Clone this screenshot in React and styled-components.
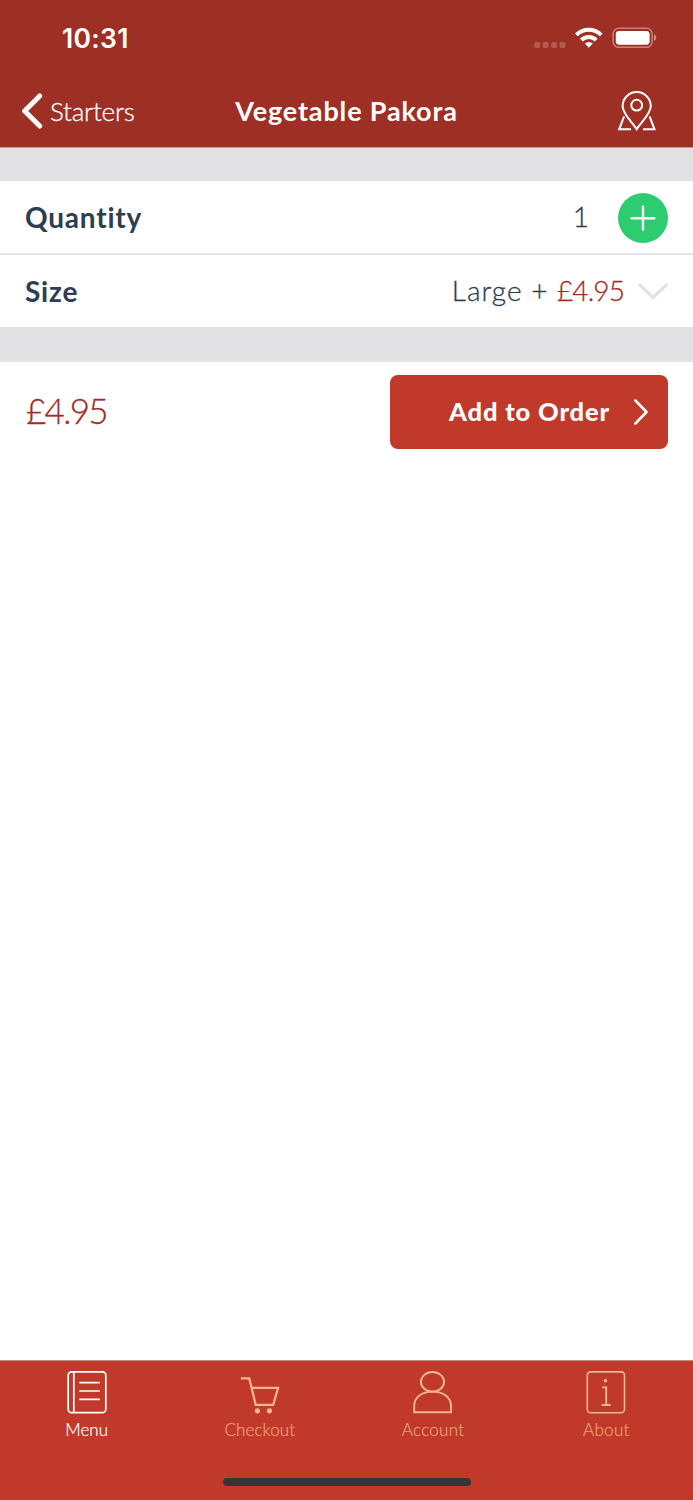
import styled, { createGlobalStyle } from "styled-components";

const v = {
  header: "#9e2f25",
  primary: "#c0392b",
  price: "#a12d22",
  text: "#2c3e50",
  gray: "#e2e2e4",
  green: "#2ecc71",
  tab: "#eda47c",
  tabIcon: "#f0b88c",
};

const tabs = [
  { name: "Menu", icon: <MenuIcon />, active: true, spacing: 0 },
  { name: "Checkout", icon: <CartIcon />, spacing: 0.1 },
  { name: "Account", icon: <AccountIcon />, spacing: 0.3 },
  { name: "About", icon: <AboutIcon />, spacing: 0.3 },
];

export default function App() {
  return (
    <Container>
      <GlobalStyle />
      <Header>
        <StatusBar>
          <Time>10:31</Time>
          <StatusIcons />
        </StatusBar>
        <NavBar>
          <BackButton>
            <svg width="22" height="36" viewBox="0 0 22 36" fill="none">
              <path
                d="M18.7 3 3.6 18 18.7 33"
                stroke="#fff"
                strokeWidth="5"
                strokeLinecap="round"
                strokeLinejoin="round"
              />
            </svg>
            <span>Starters</span>
          </BackButton>
          <Title>Vegetable Pakora</Title>
          <MapButton>
            <MapIcon />
          </MapButton>
        </NavBar>
      </Header>
      <Separator $height={33} />
      <Row $height={74} $border>
        <Label>Quantity</Label>
        <Quantity>1</Quantity>
        <AddButton>
          <svg width="50" height="50" viewBox="0 0 50 50">
            <path
              d="M25 13.8v22.8M13.6 25.2h22.8"
              stroke="#fff"
              strokeWidth="2.4"
              strokeLinecap="round"
            />
          </svg>
        </AddButton>
      </Row>
      <Row $height={72}>
        <Label>Size</Label>
        <Value>
          Large + <em>£4.95</em>
        </Value>
        <svg width="30" height="18" viewBox="0 0 30 18" fill="none">
          <path
            d="M1.8 3 15 15.5 28.2 3"
            stroke={v.gray}
            strokeWidth="3.4"
            strokeLinecap="round"
            strokeLinejoin="round"
          />
        </svg>
      </Row>
      <Separator $height={35} />
      <OrderBar>
        <Total>£4.95</Total>
        <OrderButton>
          <span>Add to Order</span>
          <svg width="16" height="28" viewBox="0 0 16 28" fill="none">
            <path
              d="M2.3 2.4 13.5 14 2.3 25.6"
              stroke="#fff"
              strokeWidth="2.7"
              strokeLinecap="round"
              strokeLinejoin="round"
            />
          </svg>
        </OrderButton>
      </OrderBar>
      <TabBar>
        <Tabs>
          {tabs.map((tab) => (
            <Tab key={tab.name} $active={tab.active} $spacing={tab.spacing}>
              {tab.icon}
              <span>{tab.name}</span>
            </Tab>
          ))}
        </Tabs>
        <HomeIndicator />
      </TabBar>
    </Container>
  );
}

function StatusIcons() {
  return (
    <svg width="124" height="24" viewBox="0 0 124 24" fill="none">
      <g fill="#fff" fillOpacity=".22">
        <rect x="0.3" y="16" width="6" height="6" rx="2" />
        <rect x="8.7" y="16" width="6" height="6" rx="2" />
        <rect x="17.1" y="16" width="6" height="6" rx="2" />
        <rect x="25.5" y="16" width="6" height="6" rx="2" />
      </g>
      <g stroke="#fff" strokeWidth="4">
        <path d="M42.4 8.8a17.6 17.6 0 0 1 24.8 0" />
        <path d="M47.4 14.1a10.4 10.4 0 0 1 14.8 0" />
      </g>
      <path d="M50.8 17.6a5.6 5.6 0 0 1 8 0l-4 4.1z" fill="#fff" />
      <rect
        x="79.1"
        y="2.3"
        width="39"
        height="19"
        rx="5.6"
        stroke="#fff"
        strokeOpacity=".4"
        strokeWidth="1.5"
      />
      <rect x="81.8" y="4.9" width="33.8" height="13.8" rx="3.4" fill="#fff" />
      <path d="M120 8.6c3.1 1.2 3.1 5.2 0 6.4z" fill="#fff" fillOpacity=".45" />
    </svg>
  );
}

function MapIcon() {
  return (
    <svg width="40" height="42" viewBox="0 0 40 42" fill="none">
      <g stroke="#fff" strokeWidth="2">
        <path d="M19.7 39.3C15.7 33 5.6 23.5 5.6 16.2a14.1 14.1 0 0 1 28.2 0C33.8 23.5 23.7 33 19.7 39.3z" />
        <circle cx="19.7" cy="15.2" r="5.4" />
        <path d="M7.1 26.3 2.2 39.3H14M32.6 26.3l4.9 13H26" />
      </g>
    </svg>
  );
}

function MenuIcon() {
  return (
    <svg width="40" height="44" viewBox="0 0 40 44" fill="none">
      <g stroke="#fff" strokeWidth="1.7">
        <rect x="1.2" y="1.9" width="37.6" height="40.8" rx="3.4" />
        <path d="M6.8 2v40.6" />
        <path d="M12.9 12.6h19.3M12.9 21h19.3M12.9 29.4h19.3" strokeLinecap="round" />
      </g>
    </svg>
  );
}

function CartIcon() {
  return (
    <svg width="40" height="44" viewBox="0 0 40 44" fill="none">
      <path
        d="M.8 8.4h8.5l6.4 26.4h17.5l4.9-17H11.6"
        stroke={v.tabIcon}
        strokeWidth="2.2"
      />
      <circle cx="17.4" cy="40.8" r="2.6" fill={v.tabIcon} />
      <circle cx="29.4" cy="40.8" r="2.6" fill={v.tabIcon} />
    </svg>
  );
}

function AccountIcon() {
  return (
    <svg width="40" height="44" viewBox="0 0 40 44" fill="none">
      <g stroke={v.tabIcon} strokeWidth="1.9">
        <ellipse cx="19.5" cy="11.8" rx="11.6" ry="9.8" />
        <path d="M1.2 42.2V36C1.2 27 9 21.6 19.5 21.6S38 27 38 36v6.2z" />
      </g>
    </svg>
  );
}

function AboutIcon() {
  return (
    <svg width="40" height="44" viewBox="0 0 40 44" fill="none">
      <rect
        x="1.3"
        y="1.9"
        width="37.2"
        height="40.8"
        rx="3.4"
        stroke={v.tabIcon}
        strokeWidth="1.6"
      />
      <circle cx="19.4" cy="10.7" r="1.8" fill={v.tabIcon} />
      <path d="M16.2 17.4h4v17.4M15.6 35h9" stroke={v.tabIcon} strokeWidth="1.8" />
    </svg>
  );
}

const GlobalStyle = createGlobalStyle`
  * {
    box-sizing: border-box;
  }
  body {
    margin: 0;
    background-color: #fff;
  }
  button {
    border: none;
    background: none;
    padding: 0;
    font: inherit;
    color: inherit;
  }
  svg {
    display: block;
    flex-shrink: 0;
  }
`;
const Container = styled.div`
  display: flex;
  flex-direction: column;
  height: 1500px;
  background-color: #fff;
  color: ${v.text};
  font-family: Lato, sans-serif;
  white-space: nowrap;
`;
const Header = styled.header`
  height: 148px;
  background-color: ${v.header};
  border-bottom: 1px solid #c49792;
  color: #fff;
`;
const StatusBar = styled.div`
  display: flex;
  align-items: center;
  justify-content: space-between;
  height: 76px;
  padding: 0 35px 0 62px;
`;
const Time = styled.span`
  font-family: Inter, sans-serif;
  font-size: 26.5px;
  font-weight: 600;
  letter-spacing: 0.3px;
`;
const NavBar = styled.nav`
  display: grid;
  grid-template-columns: 1fr auto 1fr;
  align-items: center;
  height: 71px;
  padding: 0 36px 2px;
`;
const BackButton = styled.button`
  display: flex;
  align-items: center;
  gap: 7px;
  margin-left: -15px;
  font-size: 26px;
  font-weight: 300;
  letter-spacing: -0.25px;
  -webkit-text-stroke: 0.3px;
  span {
    padding-top: 1px;
  }
`;
const Title = styled.h1`
  margin: 0;
  font-size: 27px;
  font-weight: 700;
  letter-spacing: 0.85px;
`;
const MapButton = styled.button`
  justify-self: end;
`;
const Separator = styled.div`
  height: ${({ $height }) => $height}px;
  background-color: ${v.gray};
`;
const Row = styled.section`
  display: flex;
  align-items: center;
  height: ${({ $height }) => $height}px;
  padding: 0 25px;
  border-bottom: ${({ $border }) => ($border ? `2px solid ${v.gray}` : "none")};
`;
const Label = styled.span`
  margin-right: auto;
  padding-bottom: 1px;
  font-size: 28px;
  font-weight: 700;
  letter-spacing: 0.8px;
`;
const Quantity = styled.span`
  margin-right: 29px;
  padding-bottom: 2px;
  font-size: 28px;
  font-weight: 300;
  -webkit-text-stroke: 0.3px;
`;
const AddButton = styled.button`
  width: 50px;
  height: 50px;
  margin-top: 2px;
  border-radius: 50%;
  background-color: ${v.green};
`;
const Value = styled.span`
  margin-right: 14px;
  padding-bottom: 2px;
  font-size: 28px;
  font-weight: 300;
  letter-spacing: 1px;
  -webkit-text-stroke: 0.3px;
  em {
    font-style: normal;
    letter-spacing: -0.9px;
    color: ${v.price};
  }
`;
const OrderBar = styled.section`
  display: flex;
  align-items: center;
  justify-content: space-between;
  height: 100px;
  padding: 0 25px 0 26px;
`;
const Total = styled.span`
  padding-bottom: 4px;
  font-size: 35px;
  font-weight: 300;
  letter-spacing: -1.7px;
  color: ${v.price};
  -webkit-text-stroke: 0.3px;
`;
const OrderButton = styled.button`
  display: flex;
  align-items: center;
  justify-content: flex-end;
  gap: 23px;
  width: 278px;
  height: 74px;
  padding-right: 19px;
  border-radius: 8px;
  background-color: ${v.primary};
  color: #fff;
  font-size: 25.5px;
  font-weight: 900;
  letter-spacing: 0.85px;
  span {
    padding-bottom: 3px;
  }
`;
const TabBar = styled.footer`
  display: flex;
  flex-direction: column;
  align-items: center;
  justify-content: space-between;
  height: 140px;
  margin-top: auto;
  padding-bottom: 14px;
  border-top: 1px solid #c48a83;
  background-color: ${v.primary};
`;
const Tabs = styled.div`
  display: grid;
  grid-template-columns: repeat(4, 1fr);
  width: 100%;
  padding-top: 9px;
`;
const Tab = styled.button`
  display: flex;
  flex-direction: column;
  align-items: center;
  gap: 6px;
  font-size: 17px;
  font-weight: 300;
  line-height: 20px;
  letter-spacing: ${({ $spacing }) => $spacing}px;
  color: ${({ $active }) => ($active ? "#fff" : v.tab)};
  -webkit-text-stroke: 0.2px;
`;
const HomeIndicator = styled.div`
  width: 248px;
  height: 8px;
  border-radius: 4px;
  background-color: #363636;
`;
